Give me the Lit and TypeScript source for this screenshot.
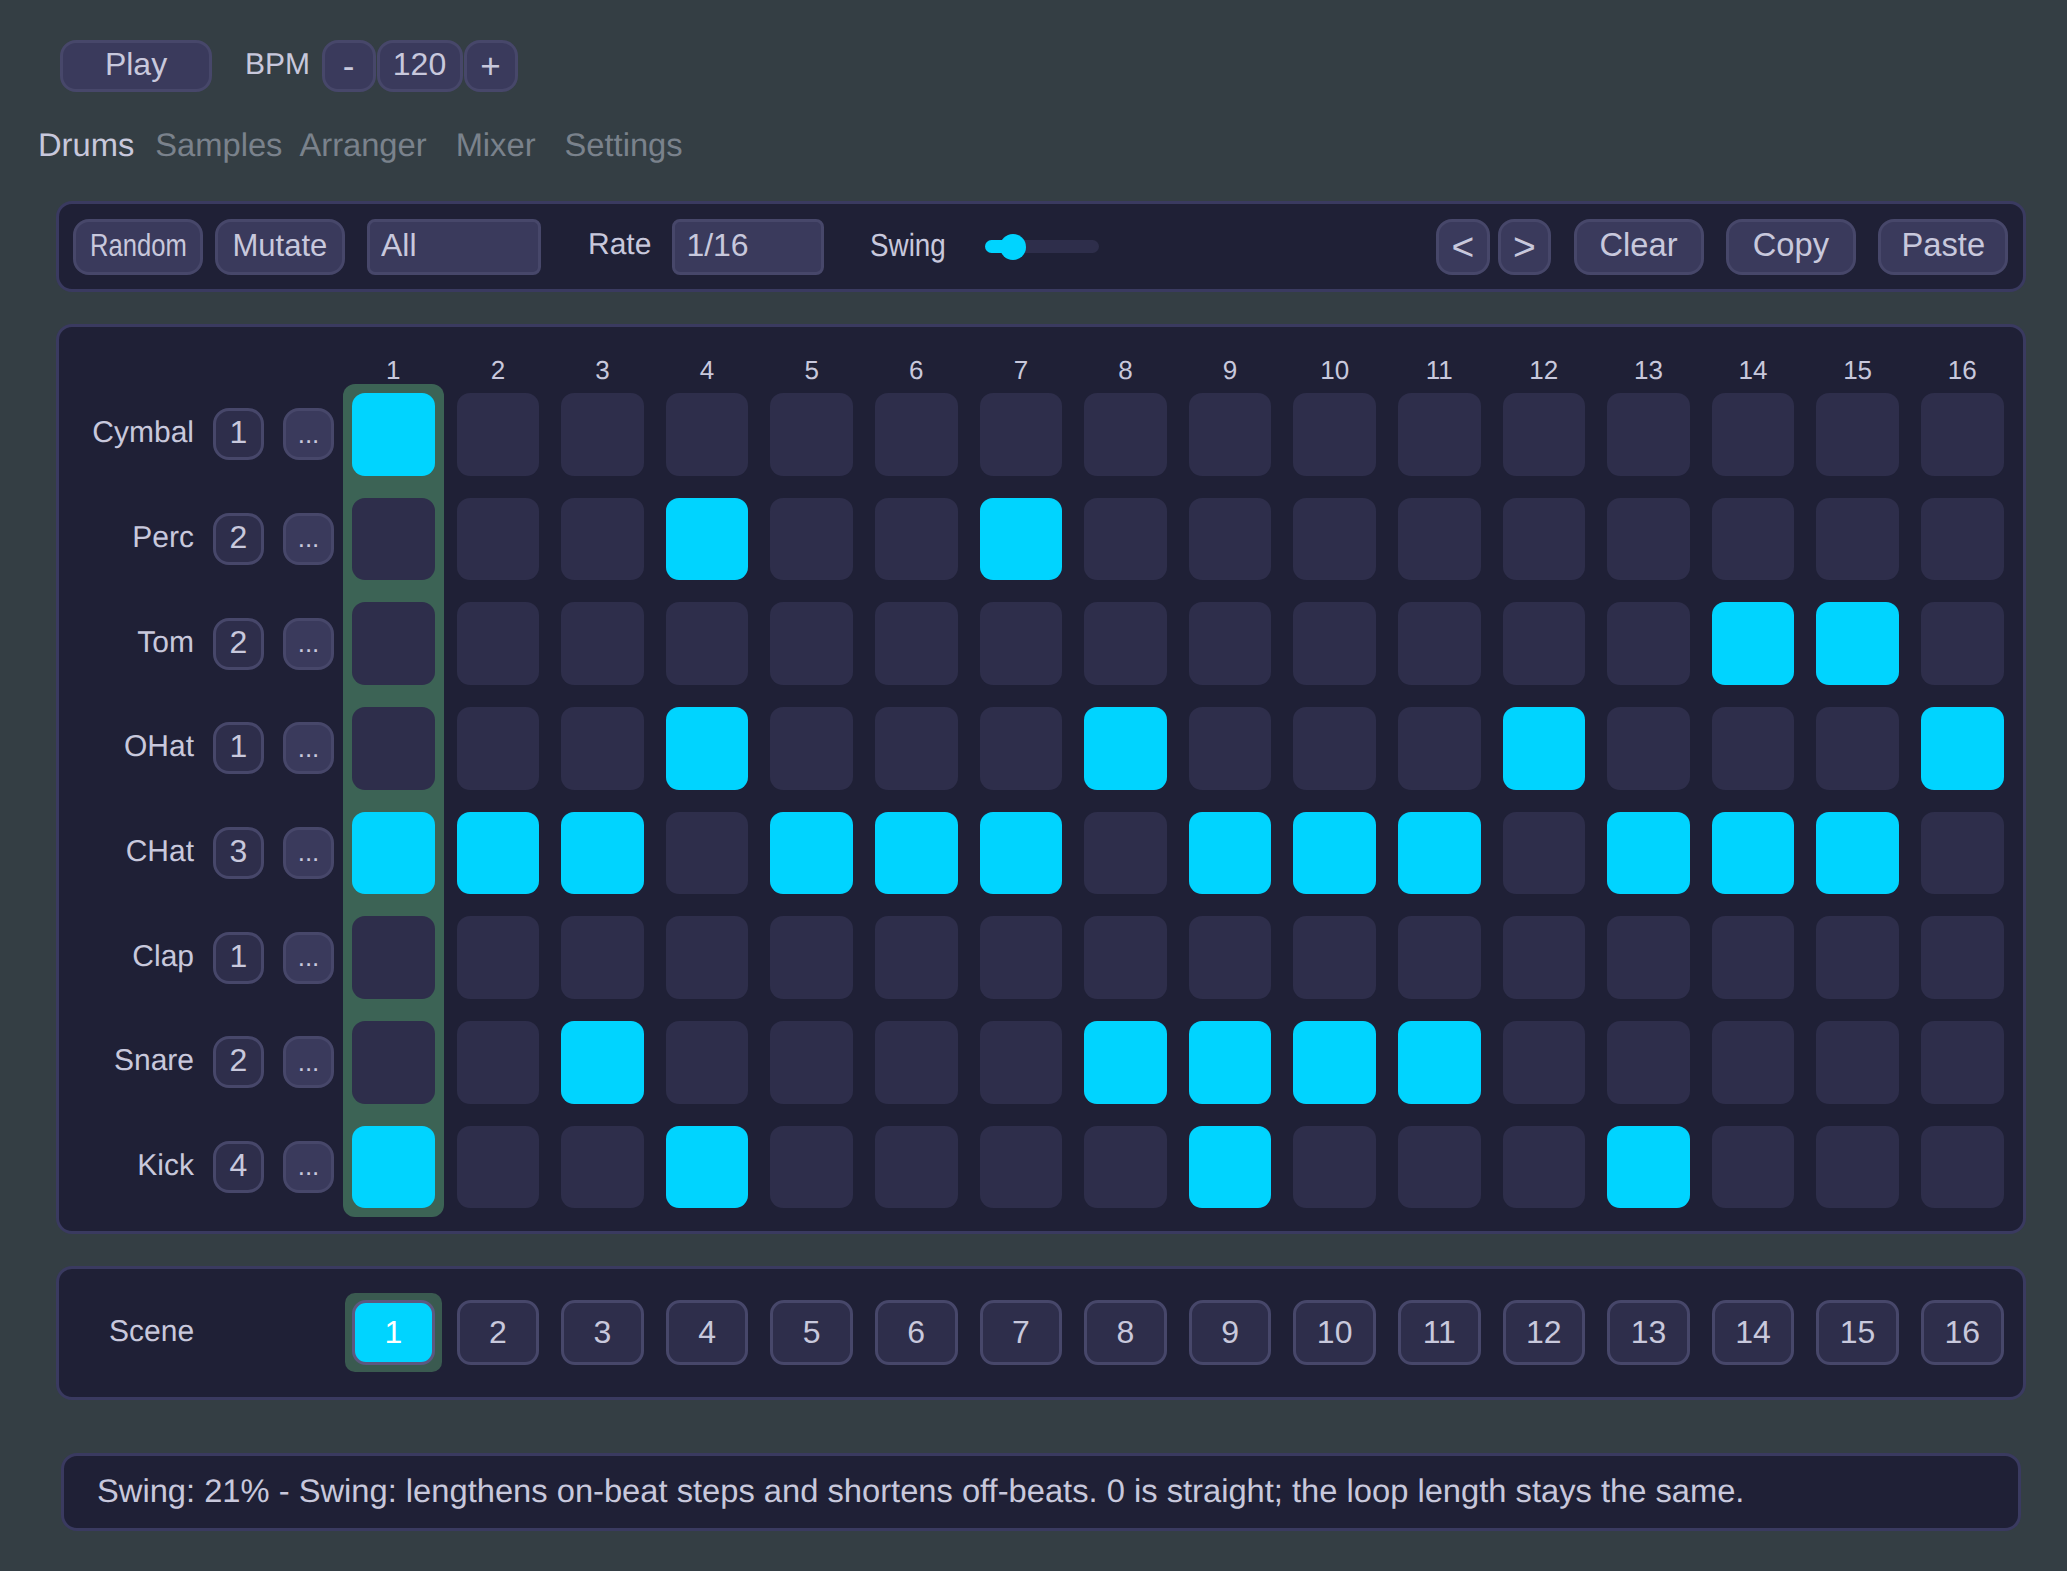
import { LitElement, html, css } from 'lit';
import { customElement, state } from 'lit/decorators.js';
import { classMap } from 'lit/directives/class-map.js';

const TRACKS = [
  { name: 'Cymbal', num: 1, on: [1] },
  { name: 'Perc', num: 2, on: [4, 7] },
  { name: 'Tom', num: 2, on: [14, 15] },
  { name: 'OHat', num: 1, on: [4, 8, 12, 16] },
  { name: 'CHat', num: 3, on: [1, 2, 3, 5, 6, 7, 9, 10, 11, 13, 14, 15] },
  { name: 'Clap', num: 1, on: [] },
  { name: 'Snare', num: 2, on: [3, 8, 9, 10, 11] },
  { name: 'Kick', num: 4, on: [1, 4, 9, 13] },
];

const STEPS = Array.from({ length: 16 }, (_, i) => i + 1);
const TABS = ['Drums', 'Samples', 'Arranger', 'Mixer', 'Settings'];

@customElement('app-root')
export class AppRoot extends LitElement {
  @state() private tab = 'Drums';
  @state() private scene = 1;

  static styles = css`
    :host {
      display: block;
      width: 2067px;
      height: 1571px;
      background: #343e44;
      color: #c8c8dc;
      font-family: 'Liberation Sans', Arial, sans-serif;
      font-size: 32.7px;
      text-rendering: geometricPrecision;
      overflow: hidden;
    }
    button,
    select {
      box-sizing: border-box;
      height: 56px;
      padding: 0 0 3px;
      margin: 0;
      font: inherit;
      color: inherit;
      background: #3a3a5c;
      border: 3px solid #47476a;
      border-radius: 16px;
    }
    select {
      appearance: none;
      border-radius: 8px;
      padding-left: 11px;
      font-size: 32px;
    }

    .transport {
      display: flex;
      align-items: center;
      height: 52px;
      padding: 40px 0 0 60px;
    }
    .transport button {
      height: 52px;
    }
    .play {
      width: 152px;
      font-size: 32px;
    }
    .bpm-label {
      margin-left: 33px;
      margin-right: 11.5px;
      padding-bottom: 3px;
      font-size: 30px;
    }
    .transport .bpm-btn {
      width: 54px;
      padding: 0;
      font-size: 35px;
    }
    .bpm-val {
      width: 86px;
      margin: 0 1px;
      font-size: 32px;
    }

    .tabs {
      display: flex;
      height: 36px;
      line-height: 36px;
      margin: 35px 0 38px 38px;
      color: #7a828c;
    }
    .tabs span.active {
      color: #c8c8dc;
    }
    .tabs span:nth-child(2) {
      margin-left: 21px;
    }
    .tabs span:nth-child(3) {
      margin-left: 17px;
    }
    .tabs span:nth-child(4) {
      margin-left: 29px;
    }
    .tabs span:nth-child(5) {
      margin-left: 29px;
    }

    .panel {
      box-sizing: border-box;
      margin: 0 41px 0 56px;
      background: #1f2036;
      border: 3px solid #3a3a60;
      border-radius: 16px;
    }

    .toolbar {
      display: flex;
      align-items: center;
      height: 91px;
      padding: 0 14.7px 0 14px;
      margin-bottom: 32px;
    }
    .toolbar button {
      width: 130px;
    }
    .random-text {
      display: inline-block;
      font-size: 32px;
      transform: scaleX(0.8);
    }
    .mutate-text {
      display: inline-block;
      font-size: 32px;
      transform: scaleX(0.97);
    }
    .mutate {
      margin-left: 12px;
    }
    .sel-pattern {
      width: 174px;
      margin-left: 22px;
    }
    .rate-label {
      margin-left: 47px;
      margin-right: 21px;
      padding-bottom: 3px;
      font-size: 30px;
    }
    .sel-rate {
      width: 152px;
    }
    .swing-label {
      margin-left: 46px;
      width: 75px;
      padding-bottom: 3px;
      font-size: 32px;
    }
    .swing-text {
      display: inline-block;
      transform: scaleX(0.87);
      transform-origin: left center;
    }
    .slider {
      position: relative;
      width: 114px;
      height: 13px;
      margin-left: 40px;
      background: #2e2e4b;
      border-radius: 7px;
    }
    .slider-fill {
      width: 28px;
      height: 13px;
      background: #00d4ff;
      border-radius: 7px;
    }
    .slider-thumb {
      position: absolute;
      left: 15px;
      top: -6.5px;
      width: 26px;
      height: 26px;
      border-radius: 50%;
      background: #00d4ff;
    }
    .toolbar .nudge {
      width: 53.5px;
      padding: 0;
      font-size: 39px;
    }
    .toolbar .nudge.first {
      margin-left: auto;
      margin-right: 8px;
    }
    .toolbar .nudge.last {
      margin-right: 22.4px;
    }
    .toolbar .copy {
      margin: 0 22.4px;
    }

    .seq {
      height: 910px;
      padding: 28px 19px 0 13px;
      margin-bottom: 32px;
    }
    .step-head {
      display: grid;
      grid-template-columns: repeat(16, 82.6px);
      column-gap: 22px;
      margin: 0 0 8px 280px;
      height: 30px;
      line-height: 30px;
      font-size: 26px;
      text-align: center;
    }
    .seq-body {
      display: flex;
    }
    .heads {
      display: flex;
      flex-direction: column;
      gap: 22px;
      width: 262px;
      margin-right: 18px;
    }
    .head {
      display: flex;
      align-items: center;
      justify-content: flex-end;
      gap: 19px;
      height: 82.67px;
      font-size: 30px;
    }
    .head span {
      padding-bottom: 2px;
    }
    .head button {
      width: 51px;
      height: 52px;
    }
    .head .num {
      background: #2e2e4b;
      font-size: 32px;
    }
    .head .more {
      font-size: 26px;
      padding: 0;
    }
    .steps {
      display: grid;
      grid-template-columns: repeat(16, 82.6px);
      grid-template-rows: repeat(8, 82.67px);
      column-gap: 22px;
      row-gap: 22px;
    }
    .playhead {
      grid-area: 1 / 1 / 9 / 2;
      margin: -9px;
      background: #3c6355;
      border-radius: 12px;
    }
    .cell {
      z-index: 1;
      background: #2e2e4b;
      border-radius: 13px;
    }
    .cell.on {
      background: #00d4ff;
    }

    .scenes {
      display: flex;
      align-items: center;
      height: 134px;
      padding: 0 19px 1px 50px;
      margin-bottom: 53px;
    }
    .scene-label {
      width: 243px;
      padding-bottom: 1px;
      font-size: 30px;
    }
    .scene-btns {
      display: grid;
      grid-template-columns: repeat(16, 82.6px);
      column-gap: 22px;
    }
    .scene-slot {
      display: flex;
      margin: -7px;
      padding: 7px;
      border-radius: 10px;
    }
    .scene-slot.active {
      background: #3a5a50;
    }
    .scene-slot button {
      flex: 1;
      height: 65px;
      padding: 0;
      font-size: 32px;
      background: #2e2e4b;
      border-radius: 14px;
    }
    .scene-slot.active button {
      background: #00d4ff;
      border-color: #5c5880;
      color: #fff;
    }

    .status {
      box-sizing: border-box;
      height: 78px;
      line-height: 69px;
      margin: 0 46px 0 61px;
      padding-left: 33px;
      background: #1f2036;
      border: 3px solid #3a3a60;
      border-radius: 16px;
    }
  `;

  private renderTrack(track: (typeof TRACKS)[number], row: number) {
    return STEPS.map(
      (s) => html`<div
        class=${classMap({ cell: true, on: track.on.includes(s) })}
        style="grid-area: ${row + 1} / ${s}"
      ></div>`
    );
  }

  render() {
    return html`
      <div class="transport">
        <button class="play">Play</button>
        <span class="bpm-label">BPM</span>
        <button class="bpm-btn">-</button>
        <button class="bpm-val">120</button>
        <button class="bpm-btn">+</button>
      </div>

      <div class="tabs">
        ${TABS.map((t) => html`<span class=${t === this.tab ? 'active' : ''}>${t}</span>`)}
      </div>

      <div class="panel toolbar">
        <button><span class="random-text">Random</span></button>
        <button class="mutate"><span class="mutate-text">Mutate</span></button>
        <select class="sel-pattern"><option>All</option></select>
        <span class="rate-label">Rate</span>
        <select class="sel-rate"><option>1/16</option></select>
        <span class="swing-label"><span class="swing-text">Swing</span></span>
        <div class="slider">
          <div class="slider-fill"></div>
          <div class="slider-thumb"></div>
        </div>
        <button class="nudge first">&lt;</button>
        <button class="nudge last">&gt;</button>
        <button>Clear</button>
        <button class="copy">Copy</button>
        <button>Paste</button>
      </div>

      <div class="panel seq">
        <div class="step-head">${STEPS.map((s) => html`<span>${s}</span>`)}</div>
        <div class="seq-body">
          <div class="heads">
            ${TRACKS.map(
              (t) => html`
                <div class="head">
                  <span>${t.name}</span>
                  <button class="num">${t.num}</button>
                  <button class="more">...</button>
                </div>
              `
            )}
          </div>
          <div class="steps">
            <div class="playhead"></div>
            ${TRACKS.map((t, i) => this.renderTrack(t, i))}
          </div>
        </div>
      </div>

      <div class="panel scenes">
        <span class="scene-label">Scene</span>
        <div class="scene-btns">
          ${STEPS.map(
            (s) => html`<div class=${classMap({ 'scene-slot': true, active: s === this.scene })}>
              <button>${s}</button>
            </div>`
          )}
        </div>
      </div>

      <div class="status">
        Swing: 21% - Swing: lengthens on-beat steps and shortens off-beats. 0 is straight; the loop length stays the same.
      </div>
    `;
  }
}
